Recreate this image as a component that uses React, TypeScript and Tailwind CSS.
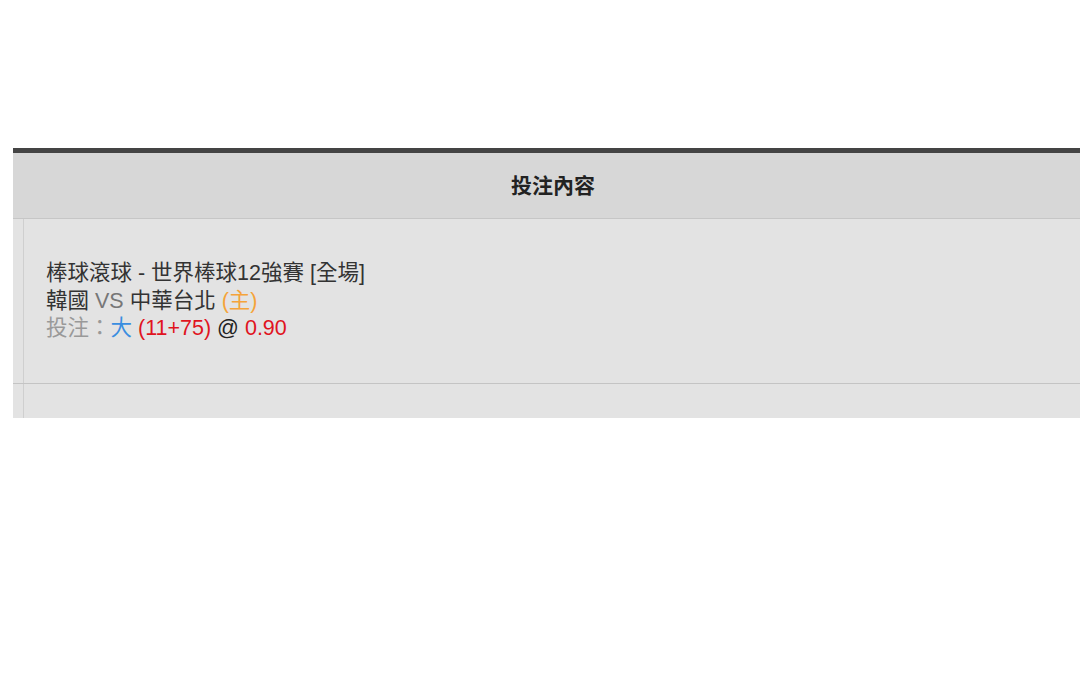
import React from "react";

export default function App() {
  const font = { fontFamily: '"Liberation Sans", Arial, "Noto Sans CJK TC", sans-serif' };
  return (
    <div className="w-[1080px] h-[693px] bg-white overflow-hidden" style={font}>
      <div className="h-[148px]" />
      <div className="ml-[13px] w-[1080px]">
        <div className="h-[5px] bg-[#444444]" />
        <div className="h-[66px] bg-[#d7d7d7] flex items-center justify-center text-[21px] text-[#222] font-bold border-b border-[#c6c6c6]">
          投注內容
        </div>
        <div className="flex bg-[#e3e3e3] border-b border-[#c4c4c4]">
          <div className="w-[11px] border-r border-[#cfcfcf]" />
          <div className="flex-1 pl-[22px] pt-[41px] pb-[40px] text-[21.5px] leading-[27.5px] text-[#333]">
            <div>棒球滾球 - 世界棒球12強賽 [全場]</div>
            <div>
              韓國 <span className="text-[#777]">VS</span> 中華台北{" "}
              <span className="text-[#f5a33a]">(主)</span>
            </div>
            <div>
              <span className="text-[#999]">投注：</span>
              <span className="text-[#3a8ee0]">大</span>{" "}
              <span className="text-[#e0141e]">(11+75)</span>{" "}
              <span className="text-[#222]">@</span>{" "}
              <span className="text-[#e0141e]">0.90</span>
            </div>
          </div>
        </div>
        <div className="flex bg-[#e3e3e3] h-[34px]">
          <div className="w-[11px] border-r border-[#cfcfcf]" />
          <div className="flex-1" />
        </div>
      </div>
    </div>
  );
}
